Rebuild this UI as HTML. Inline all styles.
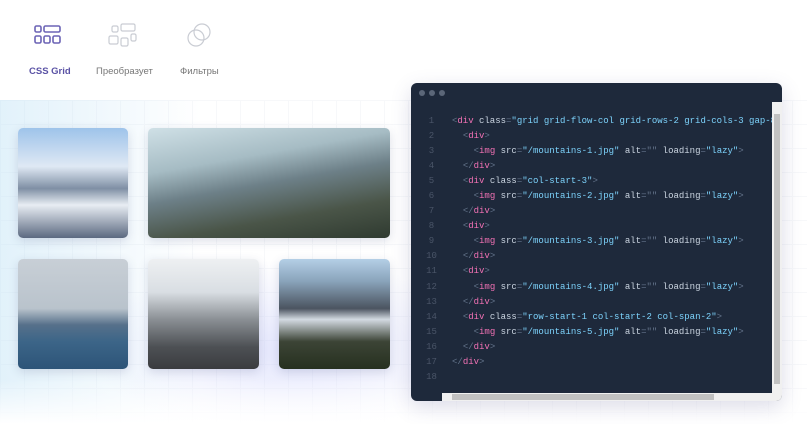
<!DOCTYPE html><html><head><style>
body{margin:0;width:807px;height:424px;overflow:hidden;background:#fff;font-family:"Liberation Sans",sans-serif;position:relative}
.bg{position:absolute;left:0;top:100px;width:807px;height:324px;background-image:linear-gradient(#eef0f6 1px,transparent 1px),linear-gradient(90deg,#eef0f6 1px,transparent 1px);background-size:24px 24px;opacity:.45}
.glow{position:absolute;left:0;top:100px;width:807px;height:324px;background:radial-gradient(ellipse 200px 90px at 290px 250px,rgba(200,205,250,.5),transparent),linear-gradient(90deg,rgba(190,225,245,.45),transparent 25%);}
.fade{position:absolute;left:0;top:380px;width:807px;height:44px;background:linear-gradient(transparent,#fff)}
.tab{position:absolute;top:66px;font-size:9.5px;color:#777}
.img{position:absolute;border-radius:5px;box-shadow:0 3px 10px rgba(60,70,120,.18);overflow:hidden}
.ed{position:absolute;left:411px;top:83px;width:371px;height:318px;background:#1e293b;border-radius:6px;box-shadow:0 6px 20px rgba(80,80,140,.2);overflow:hidden}
.dot{position:absolute;top:7px;width:6px;height:6px;border-radius:3px;background:#5b6678}
pre{position:absolute;left:0;top:31px;margin:0;font-family:"Liberation Mono",monospace;font-size:9px;line-height:15.05px;color:#cbd5e1;white-space:pre}
.n{color:#4a5568;display:inline-block;width:41px;text-align:center}
.t{color:#f472b6}.a{color:#cbd5e1}.s{color:#7dd3fc}.p{color:#64748b}
</style></head><body>
<div class="bg"></div><div class="glow"></div><div class="fade"></div>
<svg style="position:absolute;left:33px;top:24px" width="30" height="22" fill="none" stroke="#6b63b5" stroke-width="1.6"><rect x="2" y="2" width="6" height="6" rx="1.5"/><rect x="11" y="2" width="16" height="6" rx="1.5"/><rect x="2" y="12" width="6" height="7" rx="1.5"/><rect x="11" y="12" width="6" height="7" rx="1.5"/><rect x="20" y="12" width="7" height="7" rx="1.5"/></svg>
<svg style="position:absolute;left:106px;top:22px" width="34" height="26" fill="none" stroke="#c9ccd3" stroke-width="1.2"><rect x="6" y="4" width="6" height="6" rx="1.5"/><rect x="15" y="2" width="14" height="7" rx="1.5"/><rect x="3" y="14" width="9" height="8" rx="1.5"/><rect x="15" y="16" width="7" height="8" rx="1.5"/><rect x="25" y="12" width="5" height="7" rx="1.5"/></svg>
<svg style="position:absolute;left:183px;top:20px" width="32" height="30" fill="none" stroke="#c9ccd3" stroke-width="1.2"><circle cx="19" cy="12" r="8"/><circle cx="13" cy="18" r="8"/></svg>
<div class="tab" style="left:29px;color:#5a52a5;font-weight:bold">CSS Grid</div>
<div class="tab" style="left:96px">Преобразует</div>
<div class="tab" style="left:180px">Фильтры</div>
<div class="img" style="left:18px;top:128px;width:110px;height:110px;background:linear-gradient(#9ec3ea 0%,#dfe9f4 35%,#7f8fa4 55%,#e8edf3 70%,#5b6980 100%)"></div>
<div class="img" style="left:148px;top:128px;width:242px;height:110px;background:linear-gradient(170deg,#cfe0e6 0%,#a6bcc4 30%,#6d8088 50%,#4a5548 75%,#2f3a30 100%)"></div>
<div class="img" style="left:18px;top:259px;width:110px;height:110px;background:linear-gradient(#c8cfd6 0%,#b9c3cc 45%,#56708a 60%,#3c6588 75%,#2d5478 100%)"></div>
<div class="img" style="left:148px;top:259px;width:111px;height:110px;background:linear-gradient(#eef0f2 0%,#d9dee3 30%,#8a8f94 55%,#4d5054 80%,#3a3c3f 100%)"></div>
<div class="img" style="left:279px;top:259px;width:111px;height:110px;background:linear-gradient(#b4cfe6 0%,#8aa4bb 20%,#4b5460 45%,#d3dae2 55%,#3c4436 75%,#26301f 100%)"></div>
<div class="ed">
<div class="dot" style="left:8px"></div><div class="dot" style="left:18px"></div><div class="dot" style="left:28px"></div>
<pre><span class="n">1</span><span class="p">&lt;</span><span class="t">div</span> class<span class="p">=</span><span class="s">"grid grid-flow-col grid-rows-2 grid-cols-3 gap-8"</span>
<span class="n">2</span>  <span class="p">&lt;</span><span class="t">div</span><span class="p">&gt;</span>
<span class="n">3</span>    <span class="p">&lt;</span><span class="t">img</span> src<span class="p">=</span><span class="s">"/mountains-1.jpg"</span> alt<span class="p">=""</span> loading<span class="p">=</span><span class="s">"lazy"</span><span class="p">&gt;</span>
<span class="n">4</span>  <span class="p">&lt;/</span><span class="t">div</span><span class="p">&gt;</span>
<span class="n">5</span>  <span class="p">&lt;</span><span class="t">div</span> class<span class="p">=</span><span class="s">"col-start-3"</span><span class="p">&gt;</span>
<span class="n">6</span>    <span class="p">&lt;</span><span class="t">img</span> src<span class="p">=</span><span class="s">"/mountains-2.jpg"</span> alt<span class="p">=""</span> loading<span class="p">=</span><span class="s">"lazy"</span><span class="p">&gt;</span>
<span class="n">7</span>  <span class="p">&lt;/</span><span class="t">div</span><span class="p">&gt;</span>
<span class="n">8</span>  <span class="p">&lt;</span><span class="t">div</span><span class="p">&gt;</span>
<span class="n">9</span>    <span class="p">&lt;</span><span class="t">img</span> src<span class="p">=</span><span class="s">"/mountains-3.jpg"</span> alt<span class="p">=""</span> loading<span class="p">=</span><span class="s">"lazy"</span><span class="p">&gt;</span>
<span class="n">10</span>  <span class="p">&lt;/</span><span class="t">div</span><span class="p">&gt;</span>
<span class="n">11</span>  <span class="p">&lt;</span><span class="t">div</span><span class="p">&gt;</span>
<span class="n">12</span>    <span class="p">&lt;</span><span class="t">img</span> src<span class="p">=</span><span class="s">"/mountains-4.jpg"</span> alt<span class="p">=""</span> loading<span class="p">=</span><span class="s">"lazy"</span><span class="p">&gt;</span>
<span class="n">13</span>  <span class="p">&lt;/</span><span class="t">div</span><span class="p">&gt;</span>
<span class="n">14</span>  <span class="p">&lt;</span><span class="t">div</span> class<span class="p">=</span><span class="s">"row-start-1 col-start-2 col-span-2"</span><span class="p">&gt;</span>
<span class="n">15</span>    <span class="p">&lt;</span><span class="t">img</span> src<span class="p">=</span><span class="s">"/mountains-5.jpg"</span> alt<span class="p">=""</span> loading<span class="p">=</span><span class="s">"lazy"</span><span class="p">&gt;</span>
<span class="n">16</span>  <span class="p">&lt;/</span><span class="t">div</span><span class="p">&gt;</span>
<span class="n">17</span><span class="p">&lt;/</span><span class="t">div</span><span class="p">&gt;</span>
<span class="n">18</span></pre>
<div style="position:absolute;left:361px;top:19px;width:10px;height:299px;background:#f0f0f0"><div style="position:absolute;left:2px;top:12px;width:6px;height:270px;background:#c1c1c1"></div></div>
<div style="position:absolute;left:31px;top:310px;width:330px;height:8px;background:#f0f0f0"><div style="position:absolute;left:10px;top:1px;width:262px;height:6px;background:#c1c1c1"></div></div>
</div>
</body></html>
